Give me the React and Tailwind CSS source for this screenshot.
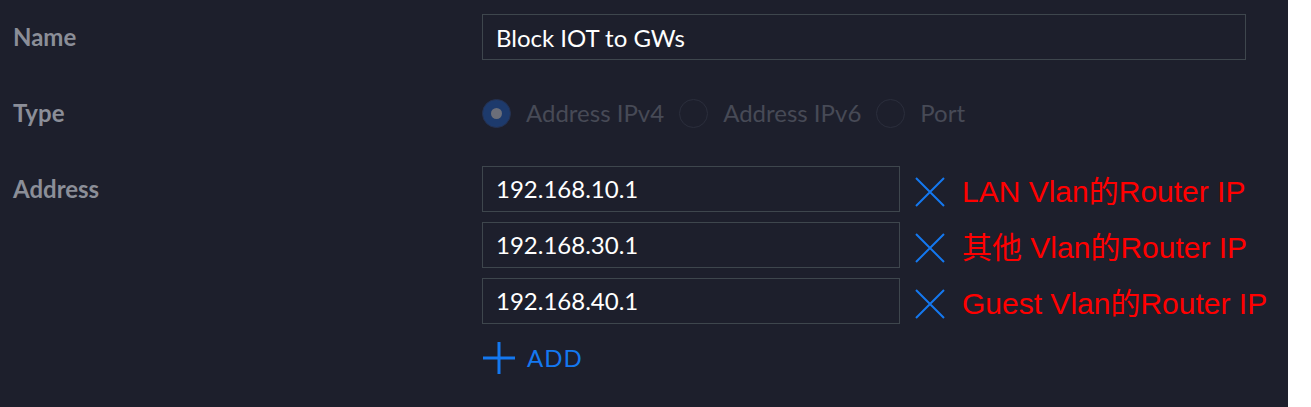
import { useState } from "react";

const addresses = [
  { ip: "192.168.10.1", note: "LAN Vlan的Router IP" },
  { ip: "192.168.30.1", note: "其他 Vlan的Router IP" },
  { ip: "192.168.40.1", note: "Guest Vlan的Router IP" },
];

const types = ["Address IPv4", "Address IPv6", "Port"];

function XIcon() {
  return (
    <svg width="32" height="30" viewBox="0 0 32 30" className="shrink-0">
      <path d="M2 1 L30 29 M30 1 L2 29" stroke="#1478f0" strokeWidth="2" fill="none" />
    </svg>
  );
}

function PlusIcon() {
  return (
    <svg width="32" height="32" viewBox="0 0 32 32" className="shrink-0">
      <path d="M16 0 V32 M0 16 H32" stroke="#1478f0" strokeWidth="3" fill="none" />
    </svg>
  );
}

export default function App() {
  const [name, setName] = useState("Block IOT to GWs");
  const [type] = useState("Address IPv4");

  return (
    <div className="flex h-[407px] bg-white font-['Lato','Noto_Sans',sans-serif]">
      <div className="w-[1288px] bg-[#1d1f2c] pt-[14px]">
        {/* Name */}
        <div className="flex items-center h-[46px]">
          <div className="w-[482px] pl-[13px] text-[24px] font-bold text-[#8b8e98]">Name</div>
          <input
            value={name}
            onChange={(e) => setName(e.target.value)}
            className="w-[764px] h-[46px] border-[1.5px] border-[#3e464d] bg-transparent px-[13px] text-[24px] text-white outline-none"
          />
        </div>

        {/* Type */}
        <div className="flex items-center h-[28px] mt-[39px]">
          <div className="w-[482px] pl-[13px] text-[24px] font-bold text-[#8b8e98]">Type</div>
          <div className="flex items-center">
            {types.map((t) => (
              <div key={t} className="flex items-center mr-[15px]">
                <span
                  className={
                    t === type
                      ? "w-[29px] h-[29px] rounded-full bg-[#1d3a6c] border-[1.5px] border-[#253150] flex items-center justify-center"
                      : "w-[29px] h-[29px] rounded-full border-[1.5px] border-[#2b2e3c]"
                  }
                >
                  {t === type && <span className="w-[11px] h-[11px] rounded-full bg-[#6b6e79]" />}
                </span>
                <span className="ml-[15px] text-[24px] text-[#474a56]">{t}</span>
              </div>
            ))}
          </div>
        </div>

        {/* Address */}
        <div className="flex mt-[39px]">
          <div className="w-[482px] pl-[13px] h-[46px] flex items-center text-[24px] font-bold text-[#8b8e98]">
            Address
          </div>
          <div className="flex flex-col">
            <div className="flex flex-col gap-[10px]">
              {addresses.map((a) => (
                <div key={a.ip} className="flex items-center h-[46px]">
                  <div className="w-[418px] h-[46px] border-[1.5px] border-[#3e464d] px-[13px] flex items-center text-[24px] text-white">
                    {a.ip}
                  </div>
                  <span className="ml-[14px] mt-[6px] flex">
                    <XIcon />
                  </span>
                  <span className="ml-[16px] mt-[6px] leading-none text-[30px] text-[#ff0000] font-['Liberation_Sans','Noto_Sans_CJK_SC',sans-serif]">
                    {a.note}
                  </span>
                </div>
              ))}
            </div>
            <div className="flex items-center mt-[16px] pl-[1px]">
              <PlusIcon />
              <span className="ml-[12px] text-[24px] tracking-[1px] text-[#1478f0]">ADD</span>
            </div>
          </div>
        </div>
      </div>
    </div>
  );
}
